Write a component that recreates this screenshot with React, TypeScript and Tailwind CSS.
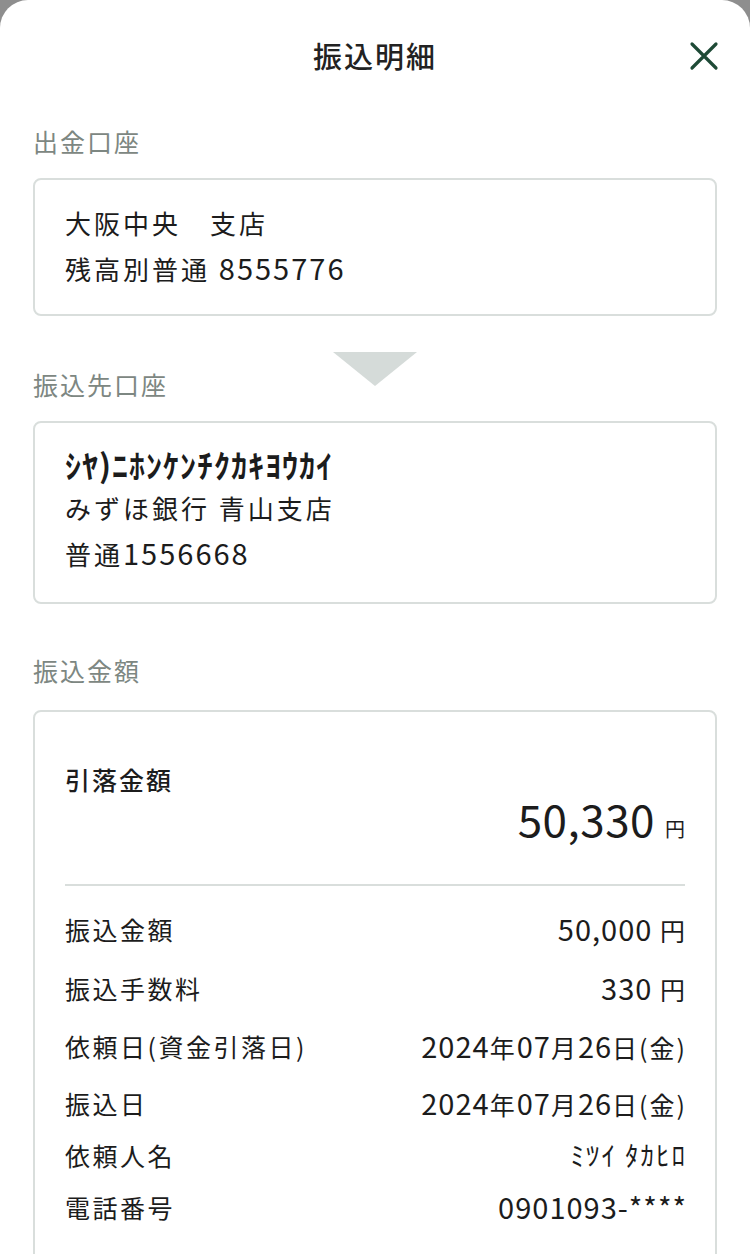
const font = { fontFamily: '"Noto Sans CJK JP", "Noto Sans", sans-serif' };

function N({ children }: { children: React.ReactNode }) {
  return <span className="text-[29px] tracking-[1px]">{children}</span>;
}

const rows = [
  { label: "振込金額", value: <><N>50,000</N> 円</>, cls: "mt-[23px]" },
  { label: "振込手数料", value: <><N>330</N> 円</>, cls: "mt-[19px]" },
  { label: "依頼日(資金引落日)", value: <><N>2024</N>年<N>07</N>月<N>26</N>日(金)</>, cls: "mt-[18px]" },
  { label: "振込日", value: <><N>2024</N>年<N>07</N>月<N>26</N>日(金)</>, cls: "mt-[17px]" },
  { label: "依頼人名", value: <span className="text-[27px]">ﾐﾂｲ ﾀｶﾋﾛ</span>, cls: "mt-[12px]" },
  { label: "電話番号", value: <N>0901093-****</N>, cls: "mt-[12px]" },
];

function SectionLabel({ children, className }: { children: React.ReactNode; className?: string }) {
  return (
    <div className={`text-[25px] leading-[36px] tracking-[2px] text-[#7d8782] ${className ?? ""}`}>
      {children}
    </div>
  );
}

export default function App() {
  return (
    <div className="h-[1254px] overflow-hidden bg-[#8e8e8e]" style={font}>
      <div className="bg-white rounded-t-[28px] h-full overflow-hidden text-[#1c1c1c]">
        {/* Header */}
        <div className="relative h-[112px] flex items-center justify-center">
          <h1 className="text-[29px] font-medium tracking-[2px] text-[#222]">振込明細</h1>
          <button className="absolute right-[31px] top-[41px] w-[30px] h-[30px]">
            <svg viewBox="0 0 30 30" className="w-[30px] h-[30px]">
              <path d="M3 3 L27 27 M27 3 L3 27" stroke="#1e4a36" strokeWidth="3.2" strokeLinecap="round" />
            </svg>
          </button>
        </div>

        <div className="px-[33px]">
          {/* 出金口座 */}
          <SectionLabel className="mt-[11px]">出金口座</SectionLabel>
          <div className="mt-[19px] border-2 border-[#d9dedc] rounded-[8px] px-[30px] pt-[20px] pb-[24px] text-[26px] leading-[45px] tracking-[3px]">
            <div className="h-[45px]">大阪中央　支店</div>
            <div className="h-[45px]">
              残高別普通 <span className="text-[29px] tracking-[2px]">8555776</span>
            </div>
          </div>

          {/* 振込先口座 */}
          <div className="relative mt-[50px]">
            <div className="absolute left-1/2 -translate-x-1/2 -top-[14px] w-0 h-0 border-l-[42px] border-r-[42px] border-t-[34px] border-l-transparent border-r-transparent border-t-[#d5dbd9]" />
            <SectionLabel>振込先口座</SectionLabel>
          </div>
          <div className="mt-[19px] border-2 border-[#d9dedc] rounded-[8px] px-[30px] pt-[19px] pb-[28px] text-[26px] leading-[44px] tracking-[3px]">
            <div className="h-[44px] text-[32px] font-bold tracking-[1px]">ｼﾔ)ﾆﾎﾝｹﾝﾁｸｶｷﾖｳｶｲ</div>
            <div className="h-[44px]">みずほ銀行 青山支店</div>
            <div className="h-[44px]">
              普通<span className="text-[29px] tracking-[2px]">1556668</span>
            </div>
          </div>

          {/* 振込金額 */}
          <SectionLabel className="mt-[48px]">振込金額</SectionLabel>
          <div className="mt-[22px] border-2 border-[#d9dedc] rounded-[8px] px-[30px] pt-[49px] pb-[40px]">
            <div className="text-[25px] leading-[36px] font-medium tracking-[2px]">引落金額</div>
            <div className="-mt-[4px] flex items-baseline justify-end gap-[10px] h-[50px] leading-[50px]">
              <span className="text-[44px] tracking-[0.5px]">50,330</span>
              <span className="text-[20px]">円</span>
            </div>
            <div className="mt-[41px] h-[2px] bg-[#d9dedc]" />
            {rows.map((r) => (
              <div key={r.label} className={`h-[40px] flex justify-between items-center text-[25px] leading-[40px] ${r.cls}`}>
                <span className="tracking-[2.5px]">{r.label}</span>
                <span className="-mr-[2px] tracking-[2px]">{r.value}</span>
              </div>
            ))}
          </div>
        </div>
      </div>
    </div>
  );
}
